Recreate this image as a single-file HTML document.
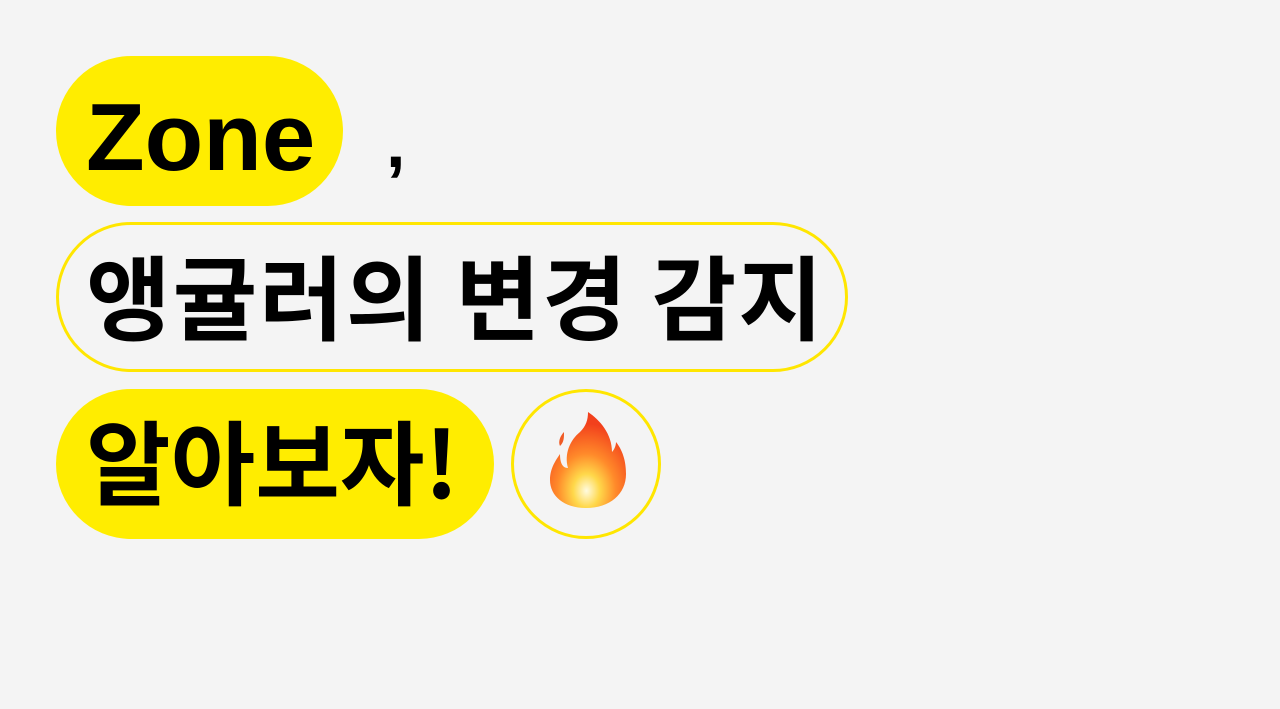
<!DOCTYPE html>
<html><head><meta charset="utf-8"><style>
html,body{margin:0;padding:0;}
body{width:1280px;height:709px;background:#f4f4f4;position:relative;overflow:hidden;font-family:"Liberation Sans","Noto Sans CJK KR",sans-serif;font-weight:bold;color:#000;}
.p{position:absolute;height:150px;border-radius:75px;box-sizing:border-box;}
.y{background:#ffed00;}
.o{border:3px solid #ffe600;}
.t{position:absolute;white-space:nowrap;line-height:1;}
</style></head><body>
<div class="p y" style="left:56px;top:56px;width:287px;"></div>
<div class="t" style="left:86px;top:90px;font-size:96px;letter-spacing:0px;">Zone</div>
<div class="t" style="left:386px;top:108px;font-size:70px;">,</div>
<div class="p o" style="left:56px;top:222px;width:792px;"></div>
<div class="t" style="left:86px;top:248px;font-size:92px;letter-spacing:2px;font-family:'Noto Sans CJK KR',sans-serif;font-weight:700;">앵귤러의 변경 감지</div>
<div class="p y" style="left:56px;top:389px;width:438px;"></div>
<div class="t" style="left:86px;top:413px;font-size:92px;letter-spacing:0px;font-family:'Noto Sans CJK KR',sans-serif;font-weight:700;">알아보자!</div>
<div class="p o" style="left:511px;top:389px;width:150px;border-radius:50%;"></div>
<svg style="position:absolute;left:540px;top:410px" width="92" height="100" viewBox="0 0 92 100">
<defs><radialGradient id="g" cx="0.48" cy="0.82" r="0.7">
<stop offset="0" stop-color="#fffbe0"/><stop offset="0.25" stop-color="#ffd84a"/><stop offset="0.55" stop-color="#ff8a2a"/><stop offset="1" stop-color="#f2401c"/></radialGradient></defs>
<path fill="url(#g)" d="M46 98 C24 98 10 86 10 70 C10 58 16 50 20 44 C20 52 22 58 28 58 C24 44 30 30 40 22 C46 16 48 10 48 2 C60 10 72 24 72 42 C74 40 76 36 76 32 C84 42 86 54 86 64 C86 84 70 98 46 98 Z"/>
<path fill="#f05a24" d="M20 36 C18 32 20 26 24 22 C24 28 24 32 20 36Z"/>
</svg>
</body></html>
